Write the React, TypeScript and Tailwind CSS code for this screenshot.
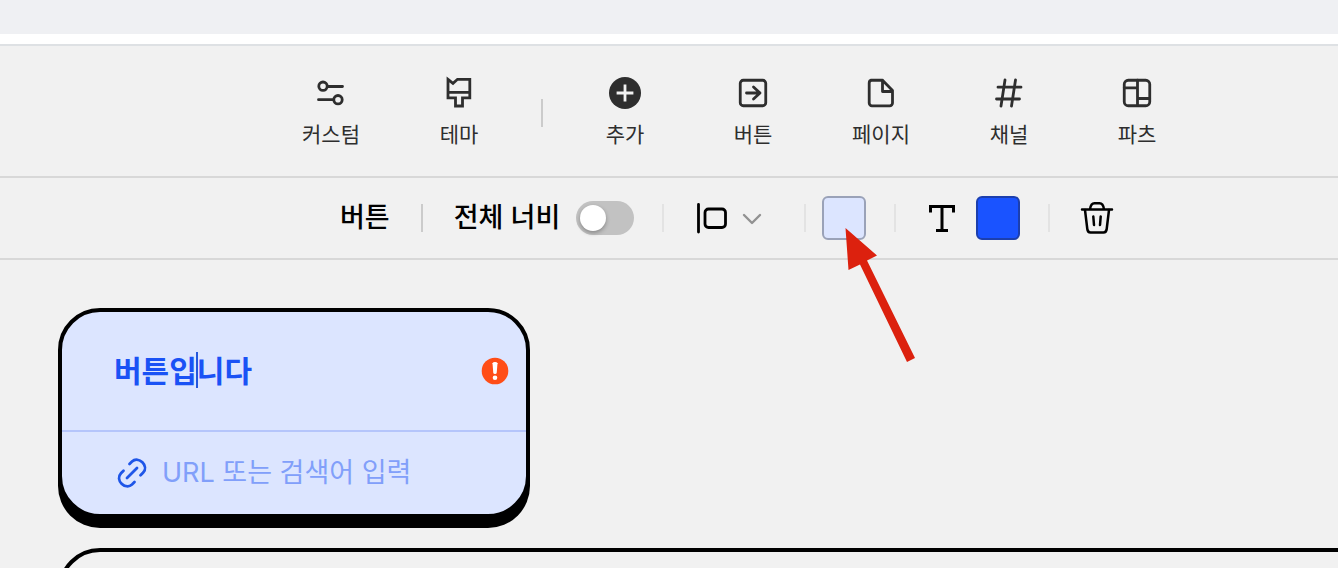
import React, {useState} from "react";

const iconProps = {
  width: 36,
  height: 36,
  viewBox: "0 0 36 36",
  fill: "none",
  stroke: "currentColor",
  strokeWidth: 2.8,
  strokeLinecap: "round",
  strokeLinejoin: "round",
  "aria-hidden": true,
} as const;

const CustomIcon = () => (
  <svg {...iconProps}>
    <circle cx="10" cy="11.200" r="4.2" />
    <path d="M14.500 11.500H29.500M5.500 24.700H20" />
    <circle cx="25" cy="24.700" r="4.2" />
  </svg>
);

const ThemeIcon = () => (
  <svg {...iconProps}>
    <path
      d="M7 4.300L12 8.300L16.500 4.300H28.800V22.800H21.500V31H14.500V22.800H7ZM7 17.300H28.800"
      strokeLinejoin="miter"
    />
  </svg>
);

const AddIcon = () => (
  <svg {...iconProps}>
    <circle cx="18" cy="18" r="16" fill="currentColor" stroke="none" />
    <path d="M18 11V25M11 18H25" stroke="#f1f1f1" strokeLinecap="square" />
  </svg>
);

const ButtonIcon = () => (
  <svg {...iconProps}>
    <rect x="5.250" y="5.250" width="25.500" height="25.500" rx="3" />
    <path d="M11.500 18H25M18.500 12L25 18L18.500 24" />
  </svg>
);

const PageIcon = () => (
  <svg {...iconProps}>
    <path d="M8 5.250H19.500L29.500 15.500V28A2.800 2.800 0 0 1 26.700 30.800H9A2.800 2.800 0 0 1 6.200 28V8A2.800 2.800 0 0 1 9 5.250M19.500 5.250V16.500H29" />
  </svg>
);

const ChannelIcon = () => (
  <svg {...iconProps}>
    <path d="M14 5L10 31M24.500 5L20.500 31M7 12.200H30M5.500 24H28.500" />
  </svg>
);

const PartsIcon = () => (
  <svg {...iconProps}>
    <rect x="5.250" y="5.250" width="25.500" height="25.500" rx="4" />
    <path d="M18.500 5.250V30.700M5.250 12.800H18.500M18.500 23.500H30.700" />
  </svg>
);

const AlignIcon = () => (
  <svg
    width="32"
    height="32"
    viewBox="0 0 32 32"
    fill="none"
    stroke="black"
    strokeWidth="2.8"
    aria-hidden
  >
    <path d="M2.500 2.500V30" strokeLinecap="round" />
    <rect x="9" y="7" width="20.500" height="18.500" rx="3.5" />
  </svg>
);

const TrashIcon = () => (
  <svg
    width="34"
    height="34"
    viewBox="0 0 34 34"
    fill="none"
    stroke="black"
    strokeWidth="2.5"
    strokeLinecap="round"
    strokeLinejoin="round"
    aria-hidden
  >
    <path d="M2 8.500H32M10 8.500C10.500 4.500 12 2.300 14.500 2.300H19.500C22 2.300 23.500 4.500 24 8.500" />
    <path d="M5 9L7.300 28C7.600 30.500 8.500 31.500 10.500 31.500H23.500C25.500 31.500 26.400 30.500 26.700 28L29 9M13.300 15.500L14 24M20.700 15.500L20 24" />
  </svg>
);

const tools = [
  {label: "추가", icon: AddIcon},
  {label: "버튼", icon: ButtonIcon},
  {label: "페이지", icon: PageIcon},
  {label: "채널", icon: ChannelIcon},
  {label: "파츠", icon: PartsIcon},
];

const ToolButton: React.FC<{label: string; icon: React.FC}> = ({
  label,
  icon: Icon,
}) => (
  <button
    type="button"
    className="flex w-32 flex-col items-center gap-2 text-[21px] leading-8 text-[#2e2e2e]"
  >
    <Icon />
    {label}
  </button>
);

const Divider: React.FC<{className?: string}> = ({
  className = "bg-[#e3e3e3]",
}) => <span className={`h-7 w-0.5 shrink-0 ${className}`} />;

const ButtonEditor: React.FC = () => {
  const [title, setTitle] = useState("버튼입니다");
  const [url, setUrl] = useState("");

  return (
    <div className="w-[472px] overflow-hidden rounded-[42px] border-4 border-black bg-[#dce5ff] shadow-[0_10px_0_0_#000]">
      <div className="flex h-[120px] items-center justify-between border-b-2 border-[#b5c5fb] pl-[52px] pr-[17px]">
        <div className="relative">
          <input
            type="text"
            aria-label="버튼 이름"
            value={title}
            onChange={(e) => setTitle(e.target.value)}
            className="block w-80 bg-transparent text-[30px] font-bold leading-10 text-[#1a52f5] outline-none"
          />
          <span className="absolute left-[82px] top-px h-9 w-0.5 bg-[#2457dc]" />
        </div>
        <svg width="28" height="28" viewBox="0 0 28 28" role="img" aria-label="오류">
          <circle cx="14" cy="14" r="13.3" fill="#ff4d17" />
          <path d="M11.500 6.300Q12 5 14 5T16.500 6.300L15.700 16Q15.500 17 14 17T12.300 16Z" fill="white" />
          <circle cx="14" cy="20.700" r="2.300" fill="white" />
        </svg>
      </div>
      <div className="flex h-[82px] items-center gap-3 pl-[52px]">
        <svg
          width="36"
          height="36"
          viewBox="0 0 36 36"
          fill="none"
          stroke="#1f56e8"
          strokeWidth="2.8"
          strokeLinecap="round"
          aria-hidden
        >
          <path d="M15.500 9L18 6.500C24.500 .5 35.500 11 29 17.800L26.500 20.300M20.500 27L18 29.500C11.500 35.500 .5 25 7 18.200L9.500 15.700M13 23L23 13" />
        </svg>
        <input
          type="text"
          aria-label="URL"
          value={url}
          onChange={(e) => setUrl(e.target.value)}
          placeholder="URL 또는 검색어 입력"
          className="w-80 bg-transparent text-[27px] leading-10 outline-none placeholder:text-[#819ffa]"
        />
      </div>
    </div>
  );
};

export default function App() {
  const [fullWidth, setFullWidth] = useState(false);

  return (
    <div className="flex h-screen flex-col overflow-hidden bg-[#f1f1f1] font-[Inter,'Noto_Sans_CJK_KR',sans-serif]">
      <div className="h-[34px] shrink-0 bg-[#eff0f3]" />
      <div className="h-2.5 shrink-0 bg-white" />

      <nav className="flex h-[134px] shrink-0 items-center border-y-2 border-b-[#d8d8d8] border-t-[#dee1e4] pl-[267px] pt-1">
        <ToolButton label="커스텀" icon={CustomIcon} />
        <ToolButton label="테마" icon={ThemeIcon} />
        <Divider className="mx-[18px] bg-[#cbcbcb]" />
        {tools.map((tool) => (
          <ToolButton key={tool.label} label={tool.label} icon={tool.icon} />
        ))}
      </nav>

      <div className="flex h-[82px] shrink-0 items-center border-b-2 border-[#d8d8d8] pl-[340px] text-[27px] font-medium leading-10 text-black">
        <span>버튼</span>
        <Divider className="mx-[31px] bg-[#cbcbcb]" />
        <label htmlFor="full-width">전체 너비</label>
        <span className="relative ml-4 flex h-[34px] w-[58px] shrink-0">
          <input
            type="checkbox"
            role="switch"
            id="full-width"
            checked={fullWidth}
            onChange={() => setFullWidth(!fullWidth)}
            className="peer size-full appearance-none rounded-full bg-[#c2c2c2] checked:bg-[#1a53ff]"
          />
          <span className="pointer-events-none absolute left-1 top-1 size-[26px] rounded-full bg-white shadow-[0_2px_4px_rgba(0,0,0,0.3)] peer-checked:left-7" />
        </span>
        <Divider className="ml-7 bg-[#e3e3e3]" />
        <button
          type="button"
          aria-label="정렬"
          className="ml-8 flex items-center gap-3.5"
        >
          <AlignIcon />
          <svg width="22" height="16" viewBox="0 0 22 16" fill="none" stroke="#929292" strokeWidth="2.4" strokeLinecap="round" strokeLinejoin="round" aria-hidden>
            <path d="M2 5L10 13L18 5" />
          </svg>
        </button>
        <Divider className="ml-10 bg-[#e3e3e3]" />
        <div className="relative ml-4 flex">
          <button
            type="button"
            aria-label="배경색"
            className="size-11 rounded-md border-2 border-[#9aa2b8] bg-[#dce5ff]"
          />
          <svg
            width="72"
            height="136"
            viewBox="0 0 72 136"
            className="pointer-events-none absolute left-[23px] top-8 max-w-none"
            aria-hidden
          >
            <path
              d="M.500 0L3.500 42L15 36.500L62 134L70 130L22 32.500L32 27.500Z"
              fill="#dc210e"
            />
          </svg>
        </div>
        <Divider className="ml-7 bg-[#e3e3e3]" />
        <button type="button" aria-label="글자색" className="ml-8 flex items-center gap-5">
          <svg width="28" height="32" viewBox="0 0 28 32" fill="none" stroke="black" strokeWidth="3" aria-hidden>
            <path d="M2.500 10.500V4.500H25.500V10.500M14 4.500V29M8 28.500H20" />
          </svg>
          <span className="size-11 rounded-md border-2 border-[#1c3fae] bg-[#1a53ff]" />
        </button>
        <Divider className="ml-7 bg-[#e3e3e3]" />
        <button type="button" aria-label="삭제" className="ml-[30px]">
          <TrashIcon />
        </button>
      </div>

      <main className="flex flex-col gap-[30px] pl-[58px] pt-12">
        <ButtonEditor />
        <div className="-mr-16 h-52 rounded-[42px] border-4 border-black" />
      </main>
    </div>
  );
}
